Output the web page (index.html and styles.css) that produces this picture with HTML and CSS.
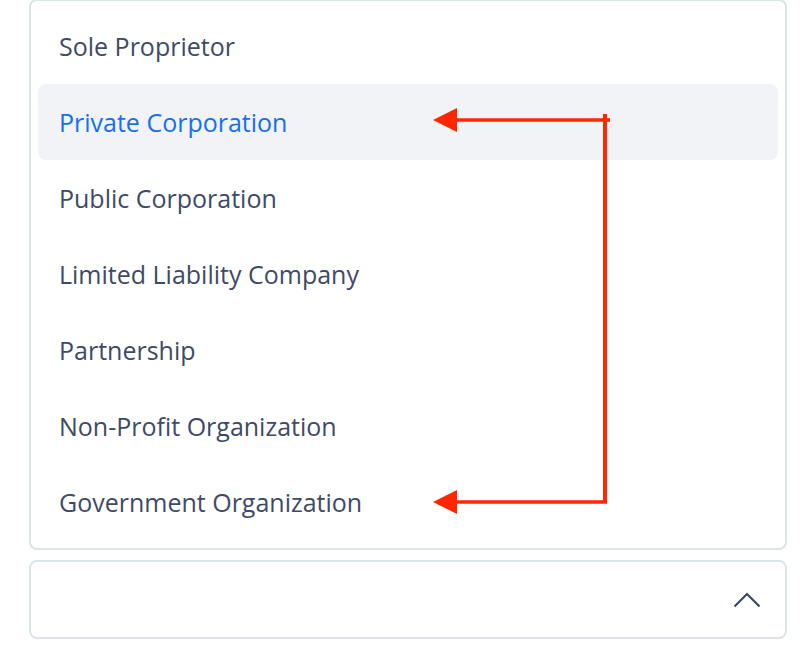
FILE: index.html
```html
<!DOCTYPE html>
<html lang="en">
<head>
<meta charset="utf-8">
<title>Company type</title>
<link rel="stylesheet" href="styles.css">
</head>
<body>
<div class="stage">
  <ul class="menu">
    <li class="item">Sole Proprietor</li>
    <li class="item active">Private Corporation</li>
    <li class="item">Public Corporation</li>
    <li class="item">Limited Liability Company</li>
    <li class="item">Partnership</li>
    <li class="item">Non-Profit Organization</li>
    <li class="item">Government Organization</li>
  </ul>
  <div class="select">
    <svg class="chevron" width="28" height="16" viewBox="0 0 28 16"><path d="M1.5 14.5 L14 2 L26.5 14.5" fill="none" stroke="#3d4966" stroke-width="2.2"/></svg>
  </div>
  <svg class="annot" width="812" height="648" viewBox="0 0 812 648">
    <g fill="#ff2600" stroke="#ff2600">
      <line x1="605" y1="114" x2="605" y2="503" stroke-width="4"/>
      <line x1="455" y1="120" x2="610" y2="120" stroke-width="3.5"/>
      <line x1="455" y1="502" x2="607" y2="502" stroke-width="3.5"/>
      <polygon points="433,120 457,108 457,132" stroke="none"/>
      <polygon points="433,502 457,490 457,514" stroke="none"/>
    </g>
  </svg>
</div>
</body>
</html>
```

FILE: styles.css
```css
html, body {
  margin: 0;
  padding: 0;
  background: #ffffff;
}
body {
  font-family: "Open Sans", "Noto Sans", sans-serif;
  color: #3f4a67;
}
.stage {
  position: relative;
  width: 812px;
  height: 648px;
  padding: 0 25px 0 29px;
  box-sizing: border-box;
  display: flex;
  flex-direction: column;
  gap: 10px;
}
.menu {
  list-style: none;
  margin: -1px 0 0 0;
  padding: 7px 7px 8px;
  border: 2px solid #dce5e8;
  border-radius: 8px;
  display: flex;
  flex-direction: column;
}
.item {
  height: 76px;
  display: flex;
  align-items: center;
  padding-left: 21px;
  font-size: 25px;
  border-radius: 8px;
}
.item.active {
  background: #f1f3f7;
  color: #1570ef;
}
.select {
  height: 75px;
  border: 2px solid #dce5e8;
  border-radius: 8px;
  display: flex;
  align-items: center;
  justify-content: flex-end;
  padding-right: 24px;
}
.chevron {
  display: block;
}
.annot {
  position: absolute;
  left: 0;
  top: 0;
  pointer-events: none;
}
```
